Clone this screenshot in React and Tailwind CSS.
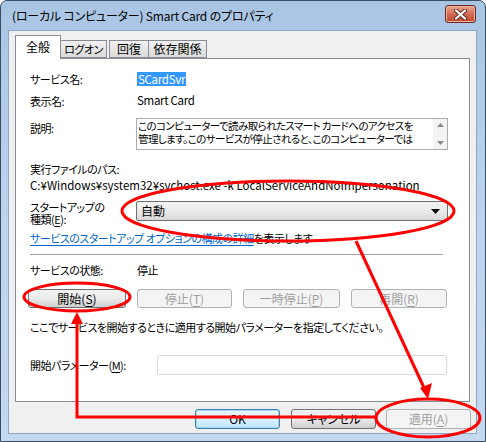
import React from 'react';

const font = {
  fontFamily: '"Noto Sans CJK JP", "Liberation Sans", sans-serif',
};

const U = ({ children }) => <span className="underline underline-offset-2">{children}</span>;

const Btn = ({ children, disabled, primary, className = '' }) => (
  <div
    className={
      'flex items-center justify-center rounded-[3px] border text-[12px] leading-none tracking-normal ' +
      (disabled
        ? 'border-[#adb2b5] bg-[#f4f4f4] text-[#a0a0a0] '
        : primary
        ? 'border-[#3c7fb1] bg-gradient-to-b from-[#eaf6fd] via-[#d9f0fc] to-[#bee6fd] text-black shadow-[inset_0_0_0_1px_#a7d9f5] '
        : 'border-[#707070] bg-gradient-to-b from-[#f2f2f2] via-[#ebebeb] to-[#cfcfcf] text-black ') +
      className
    }
  >
    {children}
  </div>
);

const App = () => {
  return (
    <div className="relative w-[486px] h-[442px] overflow-hidden bg-white [font-feature-settings:'palt']" style={font}>
      {/* window frame */}
      <div className="flex h-full w-full flex-col rounded-t-[7px] border border-[#3a4c63] bg-gradient-to-b from-[#a9c5e4] via-[#bcd4ee] to-[#c3d9f0]">
        {/* title bar */}
        <div className="flex h-[29px] items-center justify-between pl-[11px] pr-[9px]">
          <span className="text-[12px] tracking-[-0.2px] text-black">(ローカル コンピューター) Smart Card のプロパティ</span>
          <div className="mt-[-3px] flex h-[18px] w-[31px] items-center justify-center rounded-[3px] border border-[#6b2a1e] bg-gradient-to-b from-[#e8a593] via-[#d36c55] to-[#c0452b] shadow-[inset_0_0_0_1px_#eab0a2]">
            <svg width="13" height="11" viewBox="0 0 13 11">
              <path d="M2 1.5 L11 9.5 M11 1.5 L2 9.5" stroke="#5a2a20" strokeWidth="4" strokeLinecap="round" />
              <path d="M2 1.5 L11 9.5 M11 1.5 L2 9.5" stroke="#ffffff" strokeWidth="2.2" strokeLinecap="round" />
            </svg>
          </div>
        </div>

        {/* client area */}
        <div className="ml-[7px] mr-[8px] mb-[7px] flex flex-1 flex-col border border-[#8ea8c4] bg-[#f0f0f0]">
          {/* tabs */}
          <div className="ml-[6px] mt-[4px] flex h-[23px] items-end text-[12px]">
            <div className="relative z-10 -mb-px flex h-[24px] w-[46px] items-center justify-center border border-b-0 border-[#898c95] bg-white pb-[2px]">
              全般
            </div>
            <div className="flex h-[18px] w-[46px] items-center justify-center border border-l-0 border-[#898c95] bg-gradient-to-b from-[#f2f2f2] to-[#dbdbdb] text-[11px] tracking-[-0.5px]">
              ログオン
            </div>
            <div className="ml-[2px] flex h-[18px] w-[40px] items-center justify-center border border-[#898c95] bg-gradient-to-b from-[#f2f2f2] to-[#dbdbdb]">
              回復
            </div>
            <div className="flex h-[18px] w-[58px] items-center justify-center border border-l-0 border-[#898c95] bg-gradient-to-b from-[#f2f2f2] to-[#dbdbdb]">
              依存関係
            </div>
          </div>

          {/* panel */}
          <div className="ml-[6px] h-[344px] w-[455px] border border-[#898c95] bg-white pl-[14px] pt-[12px] text-[11px] tracking-[-0.5px] text-black">
            <div className="flex h-[16px] items-center">
              <div className="w-[107px]">サービス名:</div>
              <div className="bg-[#3399ff] px-[1px] text-[11.5px] leading-[14px] tracking-[-0.3px] text-white">SCardSvr</div>
            </div>
            <div className="mt-[6px] flex h-[16px] items-center">
              <div className="w-[107px]">表示名:</div>
              <div className="text-[11.5px] tracking-[-0.3px]">Smart Card</div>
            </div>
            <div className="mt-[9px] flex items-start">
              <div className="mt-[2px] w-[106px]">説明:</div>
              <div className="flex h-[32px] w-[312px] border border-[#abadb3] bg-white">
                <div className="flex-1 overflow-hidden whitespace-nowrap pl-[1px] text-[10.5px] leading-[13px] tracking-[-0.6px]">
                  このコンピューターで読み取られたスマート カードへのアクセスを
                  <br />
                  管理します。このサービスが停止されると、このコンピューターでは
                </div>
                <div className="flex w-[14px] flex-col items-center justify-between bg-[#f3f3f3] py-[4px]">
                  <svg width="7" height="4" viewBox="0 0 7 4"><path d="M0 4 L3.5 0 L7 4 Z" fill="#8a8a8a" /></svg>
                  <svg width="7" height="4" viewBox="0 0 7 4"><path d="M0 0 L3.5 4 L7 0 Z" fill="#8a8a8a" /></svg>
                </div>
              </div>
            </div>
            <div className="mt-[11px] flex h-[16px] items-center">実行ファイルのパス:</div>
            <div className="mt-[1px] flex h-[16px] items-center whitespace-nowrap text-[11.5px] tracking-normal">
              C:¥Windows¥system32¥svchost.exe -k LocalServiceAndNoImpersonation
            </div>
            <div className="mt-[7px] flex h-[24px] items-start">
              <div className="w-[106px]">
                <div className="h-[12px] leading-[12px]">スタートアップの</div>
                <div className="h-[12px] leading-[12px]">種類(<U>E</U>):</div>
              </div>
              <div className="flex h-[20px] w-[312px] items-center justify-between rounded-[2px] border border-[#707070] bg-gradient-to-b from-[#f2f2f2] via-[#ebebeb] to-[#d8d8d8] pl-[4px] pr-[7px] text-[12px] tracking-normal">
                <span>自動</span>
                <svg width="9" height="5" viewBox="0 0 9 5"><path d="M0 0 L9 0 L4.5 5 Z" fill="#000" /></svg>
              </div>
            </div>
            <div className="mt-[5px] flex h-[16px] items-center">
              <span className="text-[#0066cc] underline underline-offset-2">サービスのスタートアップ オプションの構成の詳細</span>
              <span>を表示します</span>
            </div>
            <div className="mt-[8px] h-px w-[413px] bg-[#a0a0a0]" />
            <div className="mt-[7px] flex h-[16px] items-center">
              <div className="w-[107px]">サービスの状態:</div>
              <div>停止</div>
            </div>
            <div className="-ml-[2px] mt-[11px] flex h-[19px]">
              <Btn className="w-[98px]">開始(<U>S</U>)</Btn>
              <Btn disabled className="ml-[11px] w-[95px]">停止(<U>T</U>)</Btn>
              <Btn disabled className="ml-[11px] w-[97px]">一時停止(<U>P</U>)</Btn>
              <Btn disabled className="ml-[11px] w-[96px]">再開(<U>R</U>)</Btn>
            </div>
            <div className="mt-[11px] flex h-[16px] items-center whitespace-nowrap">
              ここでサービスを開始するときに適用する開始パラメーターを指定してください。
            </div>
            <div className="mt-[20px] flex h-[20px] items-center">
              <div className="w-[127px]">開始パラメーター(<U>M</U>):</div>
              <div className="h-[20px] w-[290px] rounded-[2px] border border-[#d5dbe3] bg-white" />
            </div>
          </div>

          {/* dialog buttons */}
          <div className="mt-[7px] flex h-[20px] justify-end pr-[5px]">
            <Btn primary className="w-[85px]">OK</Btn>
            <Btn className="ml-[11px] w-[85px]">キャンセル</Btn>
            <Btn disabled className="ml-[10px] w-[85px]">適用(<U>A</U>)</Btn>
          </div>
        </div>
      </div>

      {/* red annotations */}
      <svg className="pointer-events-none absolute inset-0" width="486" height="442" viewBox="0 0 486 442">
        <g fill="none" stroke="#ff0000" strokeWidth="3">
          <ellipse cx="288" cy="211" rx="166" ry="30" />
          <ellipse cx="77" cy="297" rx="53" ry="14" />
          <ellipse cx="428" cy="418" rx="52" ry="19" />
          <path d="M356 241 L426 392" />
          <path d="M77 320 L77 417 L377 417" />
        </g>
        <path d="M428 399 L420 388 L432 383 Z" fill="#ff0000" />
        <path d="M77 312 L71 324 L83 324 Z" fill="#ff0000" />
      </svg>
    </div>
  );
};

export default App;
